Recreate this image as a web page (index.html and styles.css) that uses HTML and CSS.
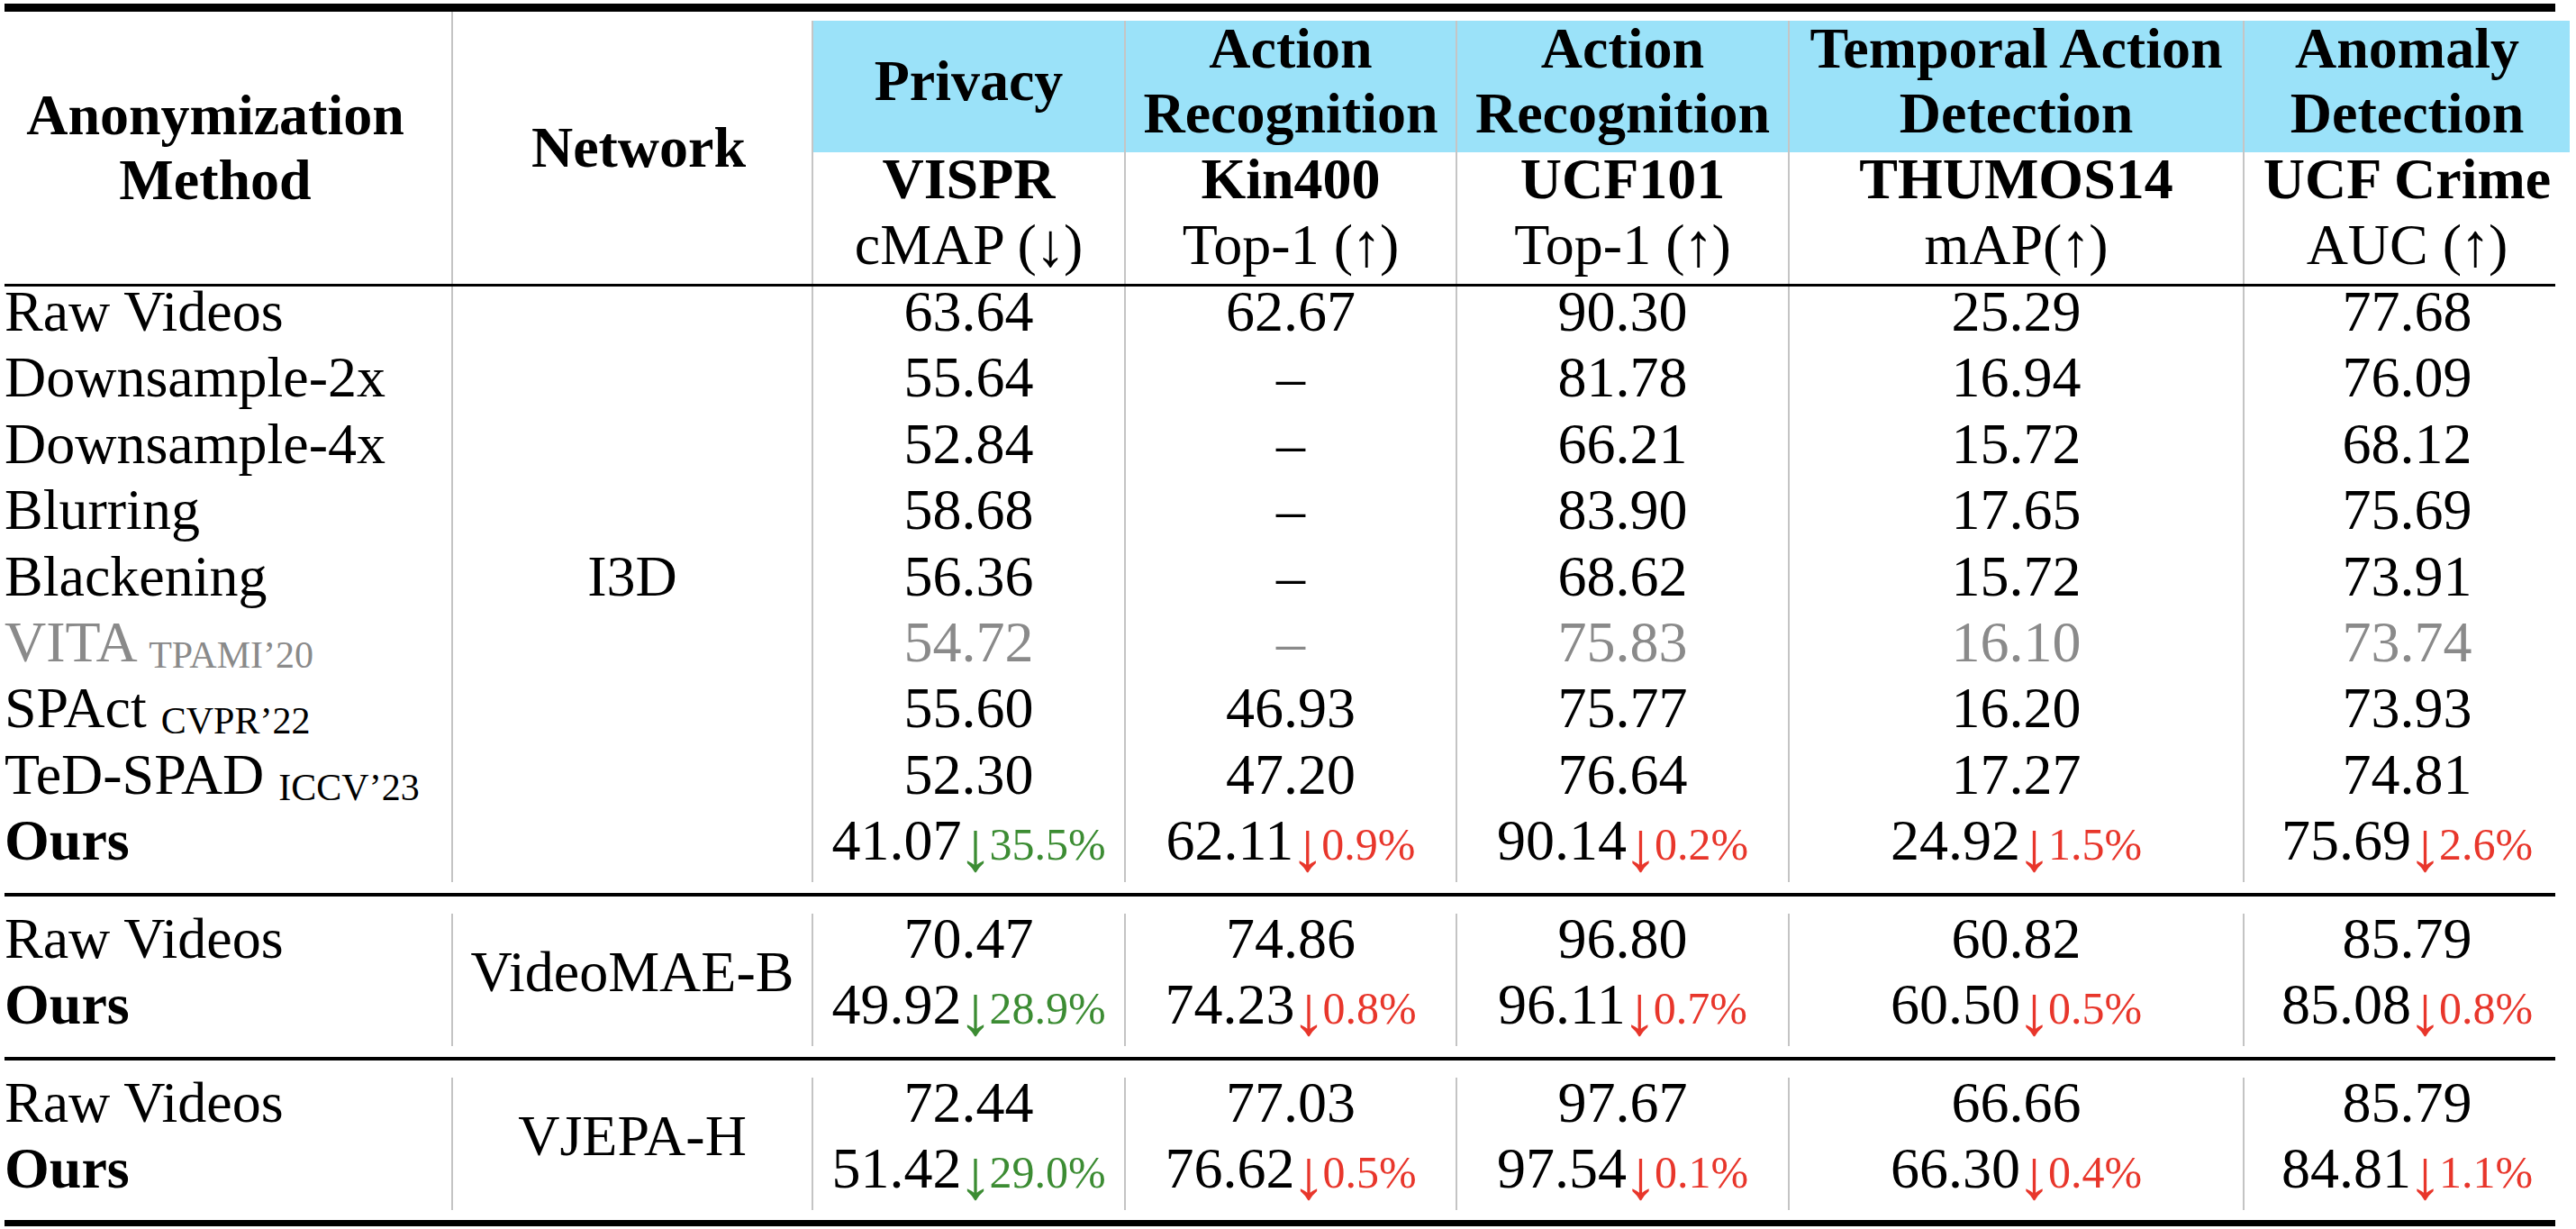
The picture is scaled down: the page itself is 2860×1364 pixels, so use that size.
FILE: index.html
```html
<!DOCTYPE html>
<html lang="en">
<head>
<meta charset="utf-8">
<title>Anonymization results</title>
<link rel="stylesheet" href="styles.css">
</head>
<body>
<div class="table">
  <div class="rule rule-top"></div>

  <div class="cols head">
    <div class="hcell hcell-method"><div>Anonymization<br>Method</div></div>
    <div class="hcell hcell-net">Network</div>
    <div class="hcell task"><div class="stack"><div class="band"><div>Privacy</div></div><div class="meta"><div class="ds">VISPR</div><div class="metric">cMAP (<span class="harr">↓</span>)</div></div></div></div>
    <div class="hcell task"><div class="stack"><div class="band"><div>Action<br>Recognition</div></div><div class="meta"><div class="ds">Kin400</div><div class="metric">Top-1 (<span class="harr">↑</span>)</div></div></div></div>
    <div class="hcell task"><div class="stack"><div class="band"><div>Action<br>Recognition</div></div><div class="meta"><div class="ds">UCF101</div><div class="metric">Top-1 (<span class="harr">↑</span>)</div></div></div></div>
    <div class="hcell task"><div class="stack"><div class="band"><div>Temporal Action<br>Detection</div></div><div class="meta"><div class="ds">THUMOS14</div><div class="metric">mAP(<span class="harr">↑</span>)</div></div></div></div>
    <div class="hcell task"><div class="stack"><div class="band"><div>Anomaly<br>Detection</div></div><div class="meta"><div class="ds">UCF Crime</div><div class="metric">AUC (<span class="harr">↑</span>)</div></div></div></div>
  </div>

  <div class="rule rule-head"></div>

  <div class="cols group">
    <div class="c m">Raw Videos</div><div class="c net span9">I3D</div><div class="c v">63.64</div><div class="c v">62.67</div><div class="c v">90.30</div><div class="c v">25.29</div><div class="c v">77.68</div>
    <div class="c m">Downsample-2x</div><div class="c v">55.64</div><div class="c v">–</div><div class="c v">81.78</div><div class="c v">16.94</div><div class="c v">76.09</div>
    <div class="c m">Downsample-4x</div><div class="c v">52.84</div><div class="c v">–</div><div class="c v">66.21</div><div class="c v">15.72</div><div class="c v">68.12</div>
    <div class="c m">Blurring</div><div class="c v">58.68</div><div class="c v">–</div><div class="c v">83.90</div><div class="c v">17.65</div><div class="c v">75.69</div>
    <div class="c m">Blackening</div><div class="c v">56.36</div><div class="c v">–</div><div class="c v">68.62</div><div class="c v">15.72</div><div class="c v">73.91</div>
    <div class="c m muted">VITA <span class="venue">TPAMI’20</span></div><div class="c v muted">54.72</div><div class="c v muted">–</div><div class="c v muted">75.83</div><div class="c v muted">16.10</div><div class="c v muted">73.74</div>
    <div class="c m">SPAct <span class="venue">CVPR’22</span></div><div class="c v">55.60</div><div class="c v">46.93</div><div class="c v">75.77</div><div class="c v">16.20</div><div class="c v">73.93</div>
    <div class="c m">TeD-SPAD <span class="venue">ICCV’23</span></div><div class="c v">52.30</div><div class="c v">47.20</div><div class="c v">76.64</div><div class="c v">17.27</div><div class="c v">74.81</div>
    <div class="c m ours">Ours</div><div class="c v">41.07<span class="delta good"><span class="arr">↓</span>35.5%</span></div><div class="c v">62.11<span class="delta bad"><span class="arr">↓</span>0.9%</span></div><div class="c v">90.14<span class="delta bad"><span class="arr">↓</span>0.2%</span></div><div class="c v">24.92<span class="delta bad"><span class="arr">↓</span>1.5%</span></div><div class="c v">75.69<span class="delta bad"><span class="arr">↓</span>2.6%</span></div>
  </div>

  <div class="rule rule-mid"></div>

  <div class="cols group">
    <div class="c m">Raw Videos</div><div class="c net span2">VideoMAE-B</div><div class="c v">70.47</div><div class="c v">74.86</div><div class="c v">96.80</div><div class="c v">60.82</div><div class="c v">85.79</div>
    <div class="c m ours">Ours</div><div class="c v">49.92<span class="delta good"><span class="arr">↓</span>28.9%</span></div><div class="c v">74.23<span class="delta bad"><span class="arr">↓</span>0.8%</span></div><div class="c v">96.11<span class="delta bad"><span class="arr">↓</span>0.7%</span></div><div class="c v">60.50<span class="delta bad"><span class="arr">↓</span>0.5%</span></div><div class="c v">85.08<span class="delta bad"><span class="arr">↓</span>0.8%</span></div>
  </div>

  <div class="rule rule-mid"></div>

  <div class="cols group">
    <div class="c m">Raw Videos</div><div class="c net span2">VJEPA-H</div><div class="c v">72.44</div><div class="c v">77.03</div><div class="c v">97.67</div><div class="c v">66.66</div><div class="c v">85.79</div>
    <div class="c m ours">Ours</div><div class="c v">51.42<span class="delta good"><span class="arr">↓</span>29.0%</span></div><div class="c v">76.62<span class="delta bad"><span class="arr">↓</span>0.5%</span></div><div class="c v">97.54<span class="delta bad"><span class="arr">↓</span>0.1%</span></div><div class="c v">66.30<span class="delta bad"><span class="arr">↓</span>0.4%</span></div><div class="c v">84.81<span class="delta bad"><span class="arr">↓</span>1.1%</span></div>
  </div>

  <div class="rule rule-bottom"></div>
</div>
</body>
</html>
```

FILE: styles.css
```css
* {
  box-sizing: border-box;
  margin: 0;
  padding: 0;
}

html, body {
  background: #ffffff;
}

body {
  margin: 0;
  color: #000000;
  font-family: "Liberation Serif", "Times New Roman", serif;
  font-size: 64px;
}

.table {
  width: 2860px;
  padding: 4px 0 0 5px;
}

/* horizontal rules (booktabs style) */
.rule {
  width: 2832px;
  background: #000000;
}
.rule-top { height: 9px; }
.rule-head { height: 3px; }
.rule-mid { height: 4px; margin: 12px 0 19.3px; }
.rule-bottom { height: 7px; margin-top: 11px; }

/* shared column template */
.cols {
  display: grid;
  grid-template-columns: 496px 400px 347px 368px 369px 505px 363px;
}

/* ---------- header ---------- */
.head {
  height: 302px;
}

.hcell {
  font-weight: bold;
  text-align: center;
  line-height: 72px;
  white-space: nowrap;
}

.hcell-method {
  display: flex;
  flex-direction: column;
  justify-content: center;
  padding-right: 28px;
}

.hcell-net {
  display: flex;
  align-items: center;
  justify-content: center;
  padding-left: 14px;
  border-left: 2px solid #c4c4c4;
}

.task {
  padding-top: 10px;
}

.stack {
  height: 100%;
  border-left: 2px solid rgba(140, 140, 140, 0.5);
}

.band {
  height: 146px;
  padding-bottom: 13px;
  display: flex;
  flex-direction: column;
  justify-content: center;
  background: #9be2f9;
}

.meta {
  margin-top: -7px;
  line-height: 73px;
}

.metric {
  font-weight: normal;
}

.harr {
  font-size: 68px;
  line-height: 0;
  vertical-align: -2px;
  margin: 0 -2px;
}

/* ---------- body ---------- */
.group {
  grid-auto-rows: 73.4px;
}

.c {
  line-height: 56.8px;
  padding-bottom: 16.6px;
  white-space: nowrap;
}

.m {
  text-align: left;
}

.v {
  text-align: center;
  border-left: 2px solid #c4c4c4;
}

.net {
  display: flex;
  align-items: center;
  justify-content: center;
  border-left: 2px solid #c4c4c4;
}

.span9 { grid-row: span 9; }
.span2 { grid-row: span 2; }

.ours {
  font-weight: bold;
}

.muted {
  color: #8a8a8a;
}

.venue {
  font-size: 42px;
  line-height: 0;
  vertical-align: -7px;
}

.delta {
  font-size: 50px;
  line-height: 0;
}

/* tall thin arrow, like TeX \downarrow */
.arr {
  font-size: 78px;
  font-weight: normal;
  line-height: 0;
  vertical-align: -12px;
  margin: 0 -4px 0 -4px;
}

.good { color: #3c8c33; }
.bad { color: #e8362b; }
```
